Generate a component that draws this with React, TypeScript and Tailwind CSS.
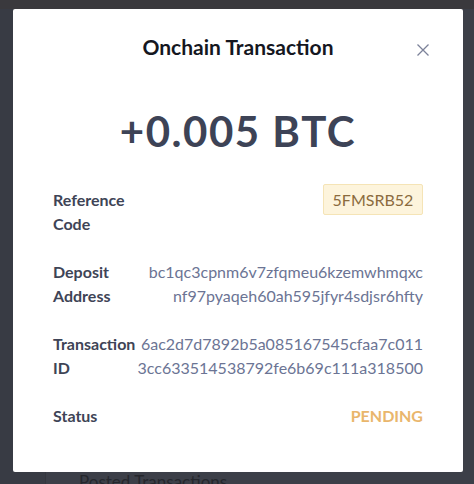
import React from "react";

const rows = [
  {
    label: ["Deposit", "Address"],
    value: ["bc1qc3cpnm6v7zfqmeu6kzemwhmqxc", "nf97pyaqeh60ah595jfyr4sdjsr6hfty"],
  },
  {
    label: ["Transaction", "ID"],
    value: ["6ac2d7d7892b5a085167545cfaa7c011", "3cc633514538792fe6b69c111a318500"],
  },
];

function CloseIcon() {
  return (
    <svg width="12" height="12" viewBox="0 0 12 12" fill="none">
      <path d="M0.5 0.5L11.5 11.5M11.5 0.5L0.5 11.5" stroke="#7c8299" strokeWidth="1.3" />
    </svg>
  );
}

export default function App() {
  return (
    <div
      className="relative w-[474px] h-[484px] overflow-hidden bg-[#3c3f48]"
      style={{ fontFamily: "Lato, 'Noto Sans', sans-serif" }}
    >
      {/* dimmed page behind the modal */}
      <div className="h-[9px] bg-[#3a393d]" />
      <div className="flex h-[475px]">
        <div className="w-[46px] bg-[#383b44] border-r border-[#34363e]" />
        <div className="flex-1 flex flex-col justify-end pl-[33px]">
          <p className="text-[17px] leading-[20px] text-[#25272d] translate-y-[8px]">Posted Transactions</p>
        </div>
      </div>

      {/* modal */}
      <div className="absolute left-[13px] top-[9px] w-[450px] h-[463px] bg-white rounded-[2px] px-10 pt-[20px]">
        <div className="relative flex justify-center">
          <h2 className="text-[21px] leading-[36px] font-bold text-[#15171f]">Onchain Transaction</h2>
          <button className="absolute right-[-10px] top-[11px] p-1">
            <CloseIcon />
          </button>
        </div>

        <div className="mt-[44px] text-center text-[42px] leading-[44px] font-bold tracking-[1.5px] text-[#3d4356]">
          +0.005 BTC
        </div>

        <div className="mt-[35px] text-[16px] leading-[24px]">
          <div className="flex justify-between items-start mb-6">
            <div className="font-bold text-[#3e4456]">
              <div>Reference</div>
              <div>Code</div>
            </div>
            <div className="-mt-1 h-[31px] w-[100px] flex items-center justify-center bg-[#fdf4dc] border border-[#f5e4b6] rounded-[2px] text-[#8b6b3e] text-[16px]">
              5FMSRB52
            </div>
          </div>

          {rows.map((r) => (
            <div key={r.label[0]} className="flex justify-between items-start mb-6">
              <div className="font-bold text-[#3e4456]">
                {r.label.map((l) => (
                  <div key={l}>{l}</div>
                ))}
              </div>
              <div className="text-right text-[#6b7494]">
                {r.value.map((v) => (
                  <div key={v}>{v}</div>
                ))}
              </div>
            </div>
          ))}

          <div className="flex justify-between items-start">
            <div className="font-bold text-[#3e4456]">Status</div>
            <div className="font-bold text-[#e9b66c]">PENDING</div>
          </div>
        </div>
      </div>
    </div>
  );
}
